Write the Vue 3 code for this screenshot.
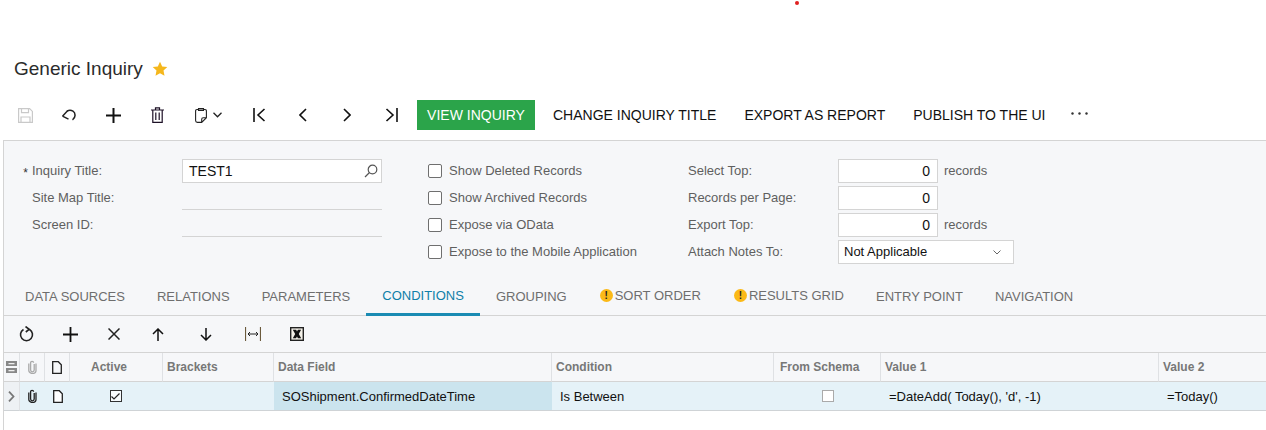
<script setup>
const fields = [
  { label: 'Inquiry Title:', req: true, value: 'TEST1', search: true },
  { label: 'Site Map Title:' },
  { label: 'Screen ID:' },
]
const checks = ['Show Deleted Records', 'Show Archived Records', 'Expose via OData', 'Expose to the Mobile Application']
const tabs = [
  { t: 'DATA SOURCES' }, { t: 'RELATIONS' }, { t: 'PARAMETERS' }, { t: 'CONDITIONS', active: true },
  { t: 'GROUPING' }, { t: 'SORT ORDER', warn: true }, { t: 'RESULTS GRID', warn: true }, { t: 'ENTRY POINT' }, { t: 'NAVIGATION' },
]
</script>

<template>
  <div class="page">
    <span class="dot"></span>
    <div class="title-row">
      <h1 class="title">Generic Inquiry</h1>
      <svg class="star" width="16" height="16" viewBox="0 0 16 16"><path fill="#f5b71c" d="M8 .8l2.200 4.700 5.100.6-3.800 3.500 1 5.100L8 12.200l-4.500 2.500 1-5.100L.7 6.100l5.100-.6z"/></svg>
    </div>

    <div class="toolbar">
      <button class="tb"><svg width="15" height="15" viewBox="0 0 15 15" fill="none" stroke="#c9c9c9" stroke-width="1.200"><path d="M.6.6h11l2.800 2.800v11H.6z"/><path d="M3.500.6v4h7v-4M3 14.400V9h9v5.400"/></svg></button>
      <button class="tb"><svg width="16" height="13" viewBox="0 0 16 13" fill="none" stroke="#222" stroke-width="1.500"><path d="M1.500 7.200L6.800 1.500M1.500 7.200l6 3"/><path d="M6 2.200C8 1 10 1 12 2.200c2.800 1.800 2.800 6.500-.5 8.600"/></svg></button>
      <button class="tb"><svg width="15" height="15" viewBox="0 0 15 15" stroke="#111" stroke-width="2"><path d="M7.500 0v15M0 7.500h15"/></svg></button>
      <button class="tb"><svg width="13" height="16" viewBox="0 0 13 16" fill="none" stroke="#1d1026" stroke-width="1.200"><path d="M0 3h13M4.500 3V.8h4V3M1.800 3v12.400h9.400V3M4.800 5.500v7.500M8.200 5.500v7.500"/></svg></button>
      <button class="tb wide"><svg width="12" height="15" viewBox="0 0 12 15" fill="none" stroke="#222" stroke-width="1.100"><path d="M3.500 1.500H2Q.6 1.500.6 2.900v9.700q0 1.800 1.800 1.800h4.300l4.700-4.700V2.900q0-1.400-1.400-1.400H8.500M3.500.6h5v1.800h-5zM6.700 14.400v-3.200q0-1.500 1.500-1.500h3.200"/></svg><svg class="caret" width="9" height="6" viewBox="0 0 9 6" fill="none" stroke="#222" stroke-width="1.300"><path d="M.5.8L4.500 4.800 8.500.8"/></svg></button>
      <button class="tb"><svg width="13" height="14" viewBox="0 0 13 14" fill="none" stroke="#111" stroke-width="1.600"><path d="M1 0v14M11.500 1L5 7l6.500 6"/></svg></button>
      <button class="tb"><svg width="8" height="14" viewBox="0 0 8 14" fill="none" stroke="#111" stroke-width="1.600"><path d="M7 1L1 7l6 6"/></svg></button>
      <button class="tb"><svg width="8" height="14" viewBox="0 0 8 14" fill="none" stroke="#111" stroke-width="1.600"><path d="M1 1l6 6-6 6"/></svg></button>
      <button class="tb"><svg width="13" height="14" viewBox="0 0 13 14" fill="none" stroke="#111" stroke-width="1.600"><path d="M12 0v14M1.500 1L8 7l-6.500 6"/></svg></button>
      <button class="primary">VIEW INQUIRY</button>
      <button class="txt">CHANGE INQUIRY TITLE</button>
      <button class="txt">EXPORT AS REPORT</button>
      <button class="txt">PUBLISH TO THE UI</button>
      <button class="more">
        <svg width="17" height="3" viewBox="0 0 17 3" fill="#333"><circle cx="1.500" cy="1.500" r="1.200"/><circle cx="8.500" cy="1.500" r="1.200"/><circle cx="15.500" cy="1.500" r="1.200"/></svg>
      </button>
    </div>

    <div class="panel">
      <div class="form">
        <div class="col col1">
          <div v-for="f in fields" :key="f.label" class="row">
            <span class="req">{{ f.req ? '*' : '' }}</span>
            <label class="lbl lbl1">{{ f.label }}</label>
            <div v-if="f.search" class="input search">
              <span>{{ f.value }}</span>
              <svg width="14" height="14" viewBox="0 0 14 14" fill="none" stroke="#555" stroke-width="1.200"><circle cx="8.500" cy="5.500" r="4.300"/><path d="M5.500 8.500L1 13"/></svg>
            </div>
            <div v-else class="ro"></div>
          </div>
        </div>
        <div class="col col2">
          <div v-for="c in checks" :key="c" class="row">
            <span class="cb"></span>
            <span class="lbl">{{ c }}</span>
          </div>
        </div>
        <div class="col col3">
          <div class="row"><label class="lbl lbl3">Select Top:</label><div class="input num">0</div><span class="lbl unit">records</span></div>
          <div class="row"><label class="lbl lbl3">Records per Page:</label><div class="input num">0</div></div>
          <div class="row"><label class="lbl lbl3">Export Top:</label><div class="input num">0</div><span class="lbl unit">records</span></div>
          <div class="row"><label class="lbl lbl3">Attach Notes To:</label>
            <div class="input sel"><span class="sel-val">Not Applicable</span><svg width="8" height="5" viewBox="0 0 8 5" fill="none" stroke="#666"><path d="M.5.500L4 4 7.500.500"/></svg></div>
          </div>
        </div>
      </div>

      <div class="tabs">
        <div v-for="t in tabs" :key="t.t" class="tab" :class="{ active: t.active, warned: t.warn }">
          <span v-if="t.warn" class="warn">!</span>{{ t.t }}
        </div>
      </div>

      <div class="gridbar">
        <button class="gb"><svg width="15" height="16" viewBox="0 0 15 16" fill="none" stroke="#222" stroke-width="1.600"><path d="M4.500 3.500a6 6 0 1 0 6 0"/><path d="M6.500.5L10.200 3.300 6.800 6"/></svg></button>
        <button class="gb"><svg width="15" height="15" viewBox="0 0 15 15" stroke="#111" stroke-width="1.800"><path d="M7.500 0v15M0 7.500h15"/></svg></button>
        <button class="gb"><svg width="12" height="12" viewBox="0 0 12 12" stroke="#222" stroke-width="1.500"><path d="M.5.500l11 11M11.500.500l-11 11"/></svg></button>
        <button class="gb"><svg width="12" height="13" viewBox="0 0 12 13" fill="none" stroke="#111" stroke-width="1.500"><path d="M6 13V1M1 6l5-5 5 5"/></svg></button>
        <button class="gb g5"><svg width="12" height="13" viewBox="0 0 12 13" fill="none" stroke="#111" stroke-width="1.500"><path d="M6 0v12M1 7l5 5 5-5"/></svg></button>
        <button class="gb g6"><svg width="16" height="14" viewBox="0 0 16 14" fill="none"><path d="M.5 0v14M15.500 0v14" stroke="#6b5a3c" stroke-width="1.200"/><path d="M3 7h10M5 5L3 7l2 2M11 5l2 2-2 2" stroke="#222"/></svg></button>
        <button class="gb g7"><svg width="14" height="14" viewBox="0 0 14 14"><rect x=".7" y=".7" width="12.600" height="12.600" fill="#f3f0e8" stroke="#222" stroke-width="1.400"/><path d="M2.800 2.800h3.400L7 4.500l.9-1.700h3.200L8.800 7l2.400 4.200H7.900L7 9.400l-1 1.800H2.800L5.200 7z" fill="#111"/></svg></button>
      </div>

      <div class="grid">
        <div class="th ic"><svg width="11" height="12" viewBox="0 0 11 12" fill="#888"><path d="M0 0h11v5H0zM0 7h11v5H0z"/><path d="M2.500 2h6v1.200h-6zM2.500 9h6v1.200h-6z" fill="#eee"/></svg></div>
        <div class="th ic"><svg width="9" height="14" viewBox="0 0 9 14" fill="none" stroke="#a9a9a9" stroke-width="1.300"><path d="M6.200 4v6a1.800 1.800 0 0 1-3.600 0V2.800a1.500 1.500 0 0 1 3 0"/><path d="M8 3.500v7a3.600 3 0 0 1-7.200 0v-7"/></svg></div>
        <div class="th ic"><svg width="10" height="13" viewBox="0 0 10 13" fill="none" stroke="#222" stroke-width="1.300"><path d="M.7.700h5.600l3 3v8.600H.7z"/></svg></div>
        <div class="th ctr active-h">Active</div>
        <div class="th">Brackets</div>
        <div class="th">Data Field</div>
        <div class="th">Condition</div>
        <div class="th schema">From Schema</div>
        <div class="th">Value 1</div>
        <div class="th last">Value 2</div>

        <div class="td ic first"><svg width="7" height="11" viewBox="0 0 7 11" fill="none" stroke="#777" stroke-width="1.800"><path d="M1 .7l4.500 4.800L1 10.300"/></svg></div>
        <div class="td ic"><svg width="9" height="14" viewBox="0 0 9 14" fill="none" stroke="#222" stroke-width="1.300"><path d="M6.200 4v6a1.800 1.800 0 0 1-3.600 0V2.800a1.500 1.500 0 0 1 3 0"/><path d="M8 3.500v7a3.600 3 0 0 1-7.200 0v-7"/></svg></div>
        <div class="td ic"><svg width="10" height="13" viewBox="0 0 10 13" fill="#fff" stroke="#222" stroke-width="1.300"><path d="M.7.700h5.600l3 3v8.600H.7z"/></svg></div>
        <div class="td ctr active-c"><span class="chk"><svg width="9" height="7" viewBox="0 0 9 7" fill="none" stroke="#222" stroke-width="1.200"><path d="M.5 3.500l2.500 2.500L8.500.5"/></svg></span></div>
        <div class="td"></div>
        <div class="td sel-cell">SOShipment.ConfirmedDateTime</div>
        <div class="td txt-cell">Is Between</div>
        <div class="td ctr"><span class="chk off"></span></div>
        <div class="td txt-cell">=DateAdd( Today(), 'd', -1)</div>
        <div class="td txt-cell">=Today()</div>
      </div>
      <div class="blank"></div>
    </div>
  </div>
</template>

<style>
html, body { margin: 0; background: #fff; overflow: hidden; }
</style>

<style scoped>
.page { position: relative; width: 1266px; height: 430px; overflow: hidden; font-family: "Liberation Sans", Arial, sans-serif; color: #222; }
button { border: 0; background: none; padding: 0; font: inherit; display: flex; align-items: center; justify-content: center; }
.dot { position: absolute; left: 795px; top: 1px; width: 4px; height: 4px; border-radius: 50%; background: #e02020; }
.title-row { height: 100px; box-sizing: border-box; padding: 58px 0 0 14px; display: flex; align-items: flex-start; }
.title { margin: 0; font-size: 19px; line-height: 22px; font-weight: 400; color: #2b2b2b; }
.star { margin: 3px 0 0 9px; }
.toolbar { height: 30px; padding-left: 3px; display: flex; align-items: center; }
.tb { width: 44px; height: 30px; position: relative; flex: none; }
.wide { width: 58px; justify-content: flex-start; padding-left: 16px; box-sizing: border-box; }
.caret { position: absolute; left: 34px; top: 12px; }
.primary { margin-left: 4px; width: 118px; height: 30px; background: #2ba44a; color: #fff; font-size: 14px; }
.txt { margin-left: 18px; font-size: 14px; height: 30px; color: #111; }
.txt + .txt { margin-left: 28px; }
.more { margin-left: 26px; height: 30px; align-items: flex-start; padding-top: 12px; }
.panel { margin: 10px 0 0 3px; border-top: 1px solid #d4d4d4; border-left: 1px solid #d4d4d4; background: #f6f7f9; height: 290px; box-sizing: border-box; overflow: hidden; }
.form { display: flex; height: 139px; box-sizing: border-box; padding-top: 18px; }
.col { display: flex; flex-direction: column; gap: 3px; }
.col1 { width: 424px; }
.col2 { width: 260px; }
.row { height: 24px; display: flex; align-items: center; position: relative; font-size: 13px; }
.lbl { color: #5f5f5f; font-size: 13px; white-space: nowrap; padding-bottom: 2px; }
.req { width: 28px; text-align: right; padding: 3px 4px 0 0; box-sizing: border-box; color: #333; font-size: 12px; }
.lbl1 { width: 150px; }
.input { box-sizing: border-box; height: 24px; border: 1px solid #d4d4d4; background: #fff; color: #111; font-size: 14px; display: flex; align-items: center; padding: 0 6px; }
.search { width: 200px; justify-content: space-between; padding-right: 3px; }
.ro { width: 200px; height: 24px; border-bottom: 1px solid #d4d4d4; box-sizing: border-box; }
.cb { width: 14px; height: 14px; box-sizing: border-box; border: 1px solid #6f6f6f; border-radius: 2px; background: #fff; margin-right: 7px; }
.lbl3 { width: 150px; }
.num { width: 100px; justify-content: flex-end; padding-right: 7px; }
.unit { margin-left: 6px; }
.sel { width: 176px; justify-content: space-between; padding: 0 12px 0 5px; font-size: 13px; }
.sel-val { padding-bottom: 2px; }
.tabs { height: 36px; box-sizing: border-box; border-bottom: 1px solid #d4d4d4; display: flex; padding-left: 5px; }
.tab { height: 36px; box-sizing: border-box; padding: 9px 16px 0; font-size: 13px; color: #6e6e6e; white-space: nowrap; }
.tab.active { color: #0f7fa8; border-bottom: 3px solid #1a8bb3; padding-top: 8px; }
.tab.warned { padding-top: 8px; padding-left: 17px; display: flex; align-items: flex-start; }
.warn { width: 13px; height: 13px; margin: 1px 2px 0 0; border-radius: 50%; background: #fbb917; color: #222; font-size: 10px; font-weight: 700; line-height: 13px; text-align: center; flex: none; }
.gridbar { height: 36px; display: flex; align-items: center; }
.gb { width: 44px; height: 36px; flex: none; }
.g5 { margin-left: 4px; }
.g6 { margin-left: 3px; }
.grid { display: grid; grid-template-columns: 16px 25px 25px 93px 111px 278px 222px 107px 278px 108px; grid-template-rows: 29px 29px; border-top: 1px solid #d4d4d4; }
.th { box-sizing: border-box; border-right: 1px solid #dfe1e4; border-bottom: 1px solid #d4d4d4; font-size: 12px; font-weight: 700; color: #777; padding: 0 4px; display: flex; align-items: center; white-space: nowrap; }
.th.last { border-right: 0; }
.ic { padding: 0; justify-content: center; }
.ctr { justify-content: center; padding: 0; }
.active-h { padding-right: 14px; }
.active-c { padding-right: 2px; }
.schema { padding-left: 6px; }
.td { box-sizing: border-box; background: #e5f2f8; border-bottom: 1px solid #cfd3d6; display: flex; align-items: center; font-size: 13px; color: #111; white-space: nowrap; }
.first { background: #eef1f4; border-right: 1px solid #dfe1e4; }
.sel-cell { background: #cbe4ee; padding-left: 8px; }
.txt-cell { padding-left: 8px; }
.chk { width: 12px; height: 12px; box-sizing: border-box; border: 1px solid #333; display: flex; align-items: center; justify-content: center; background: #f7fbfd; }
.chk.off { border-color: #aaa; background: #fff; }
.blank { height: 40px; background: #fff; }
</style>
